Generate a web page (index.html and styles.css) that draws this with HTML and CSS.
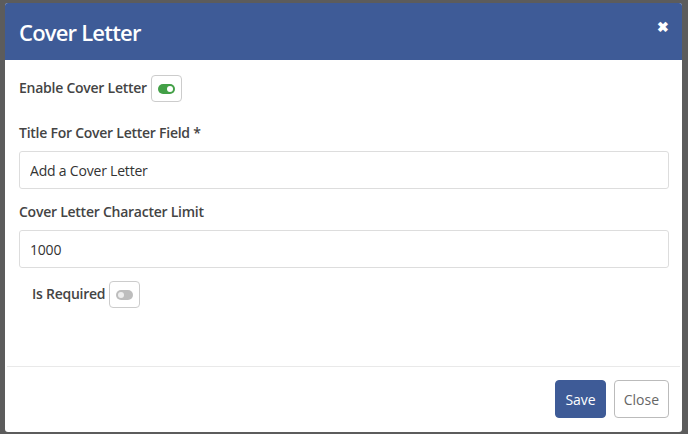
FILE: index.html
```html
<!DOCTYPE html>
<html lang="en">
<head>
  <meta charset="UTF-8" />
  <meta name="viewport" content="width=device-width, initial-scale=1" />
  <title>Cover Letter</title>
  <link rel="stylesheet" href="styles.css">
</head>
<body>

  <div class="modal">
    <div class="modal-header">
      <h2>Cover Letter</h2>
      <span class="close-x">&#x2716;</span>
    </div>

    <div class="modal-body">
      <div class="toggle-row">
        <label>Enable Cover Letter</label>
        <span class="toggle-box"><span class="switch on"></span></span>
      </div>

      <label class="field-label">Title For Cover Letter Field *</label>
      <input type="text" class="field" value="Add a Cover Letter" />

      <label class="field-label">Cover Letter Character Limit</label>
      <input type="text" class="field" value="1000" />

      <div class="toggle-row required">
        <label>Is Required</label>
        <span class="toggle-box"><span class="switch"></span></span>
      </div>
    </div>

    <div class="modal-footer">
      <button class="btn save">Save</button>
      <button class="btn close">Close</button>
    </div>
  </div>

</body>
</html>
```

FILE: styles.css
```css
body {
  margin: 0;
  padding: 3px 6px 2px 5px;
  background: #5c5c5c;
  font-family: "Open Sans", Arial, sans-serif;
  color: #444;
}
.modal {
  height: 429px;
  background: #fff;
  border-radius: 3px;
  display: flex;
  flex-direction: column;
  overflow: hidden;
}
.modal-header {
  height: 57px;
  background: #3e5b97;
  color: #fff;
  display: flex;
  align-items: center;
  justify-content: space-between;
  padding: 0 14px;
}
.modal-header h2 {
  margin: 0;
  font-size: 22px;
  font-weight: 600;
  letter-spacing: -0.8px;
  padding-top: 1px;
}
.close-x {
  font-size: 14px;
  font-weight: bold;
  margin-top: -10px;
  margin-right: -1px;
}
.modal-body {
  flex: 1;
  padding: 15px 13px 0 14px;
}
.toggle-row {
  display: flex;
  align-items: center;
  gap: 4px;
  margin-bottom: 21px;
}
.toggle-row label,
.field-label {
  font-size: 14px;
  font-weight: 600;
  letter-spacing: -0.25px;
  color: #444;
}
.toggle-row label {
  margin-top: -2px;
}
.toggle-row.required {
  margin: 13px 0 0 13px;
}
.toggle-box {
  width: 29px;
  height: 25px;
  border: 1px solid #ccc;
  border-radius: 4px;
  display: flex;
  align-items: center;
  justify-content: center;
}
.switch {
  width: 17px;
  height: 10px;
  border-radius: 6px;
  background: #bdbdbd;
  position: relative;
}
.switch::after {
  content: "";
  position: absolute;
  top: 2px;
  left: 2px;
  width: 6px;
  height: 6px;
  border-radius: 50%;
  background: #eee;
}
.switch.on {
  background: #43a047;
}
.switch.on::after {
  left: 9px;
  background: #fff;
}
.field-label {
  display: block;
  line-height: 20px;
  margin-bottom: 8px;
}
.field {
  display: block;
  width: 100%;
  height: 38px;
  box-sizing: border-box;
  border: 1px solid #ddd;
  border-radius: 3px;
  padding: 0 10px;
  font-family: "Open Sans", Arial, sans-serif;
  font-size: 14px;
  letter-spacing: -0.2px;
  color: #333;
  margin-bottom: 13px;
}
.modal-footer {
  border-top: 1px solid #e9e9e9;
  margin: 0 2px;
  padding: 13px 11px 14px;
  display: flex;
  justify-content: flex-end;
  gap: 8px;
}
.btn {
  height: 38px;
  border-radius: 4px;
  font-family: "Open Sans", Arial, sans-serif;
  font-size: 14px;
  padding: 0 9px;
  cursor: pointer;
}
.btn.save {
  background: #3e5b97;
  border: 1px solid #3e5b97;
  color: #fff;
}
.btn.close {
  background: #fff;
  border: 1px solid #bbb;
  color: #666;
}
```
